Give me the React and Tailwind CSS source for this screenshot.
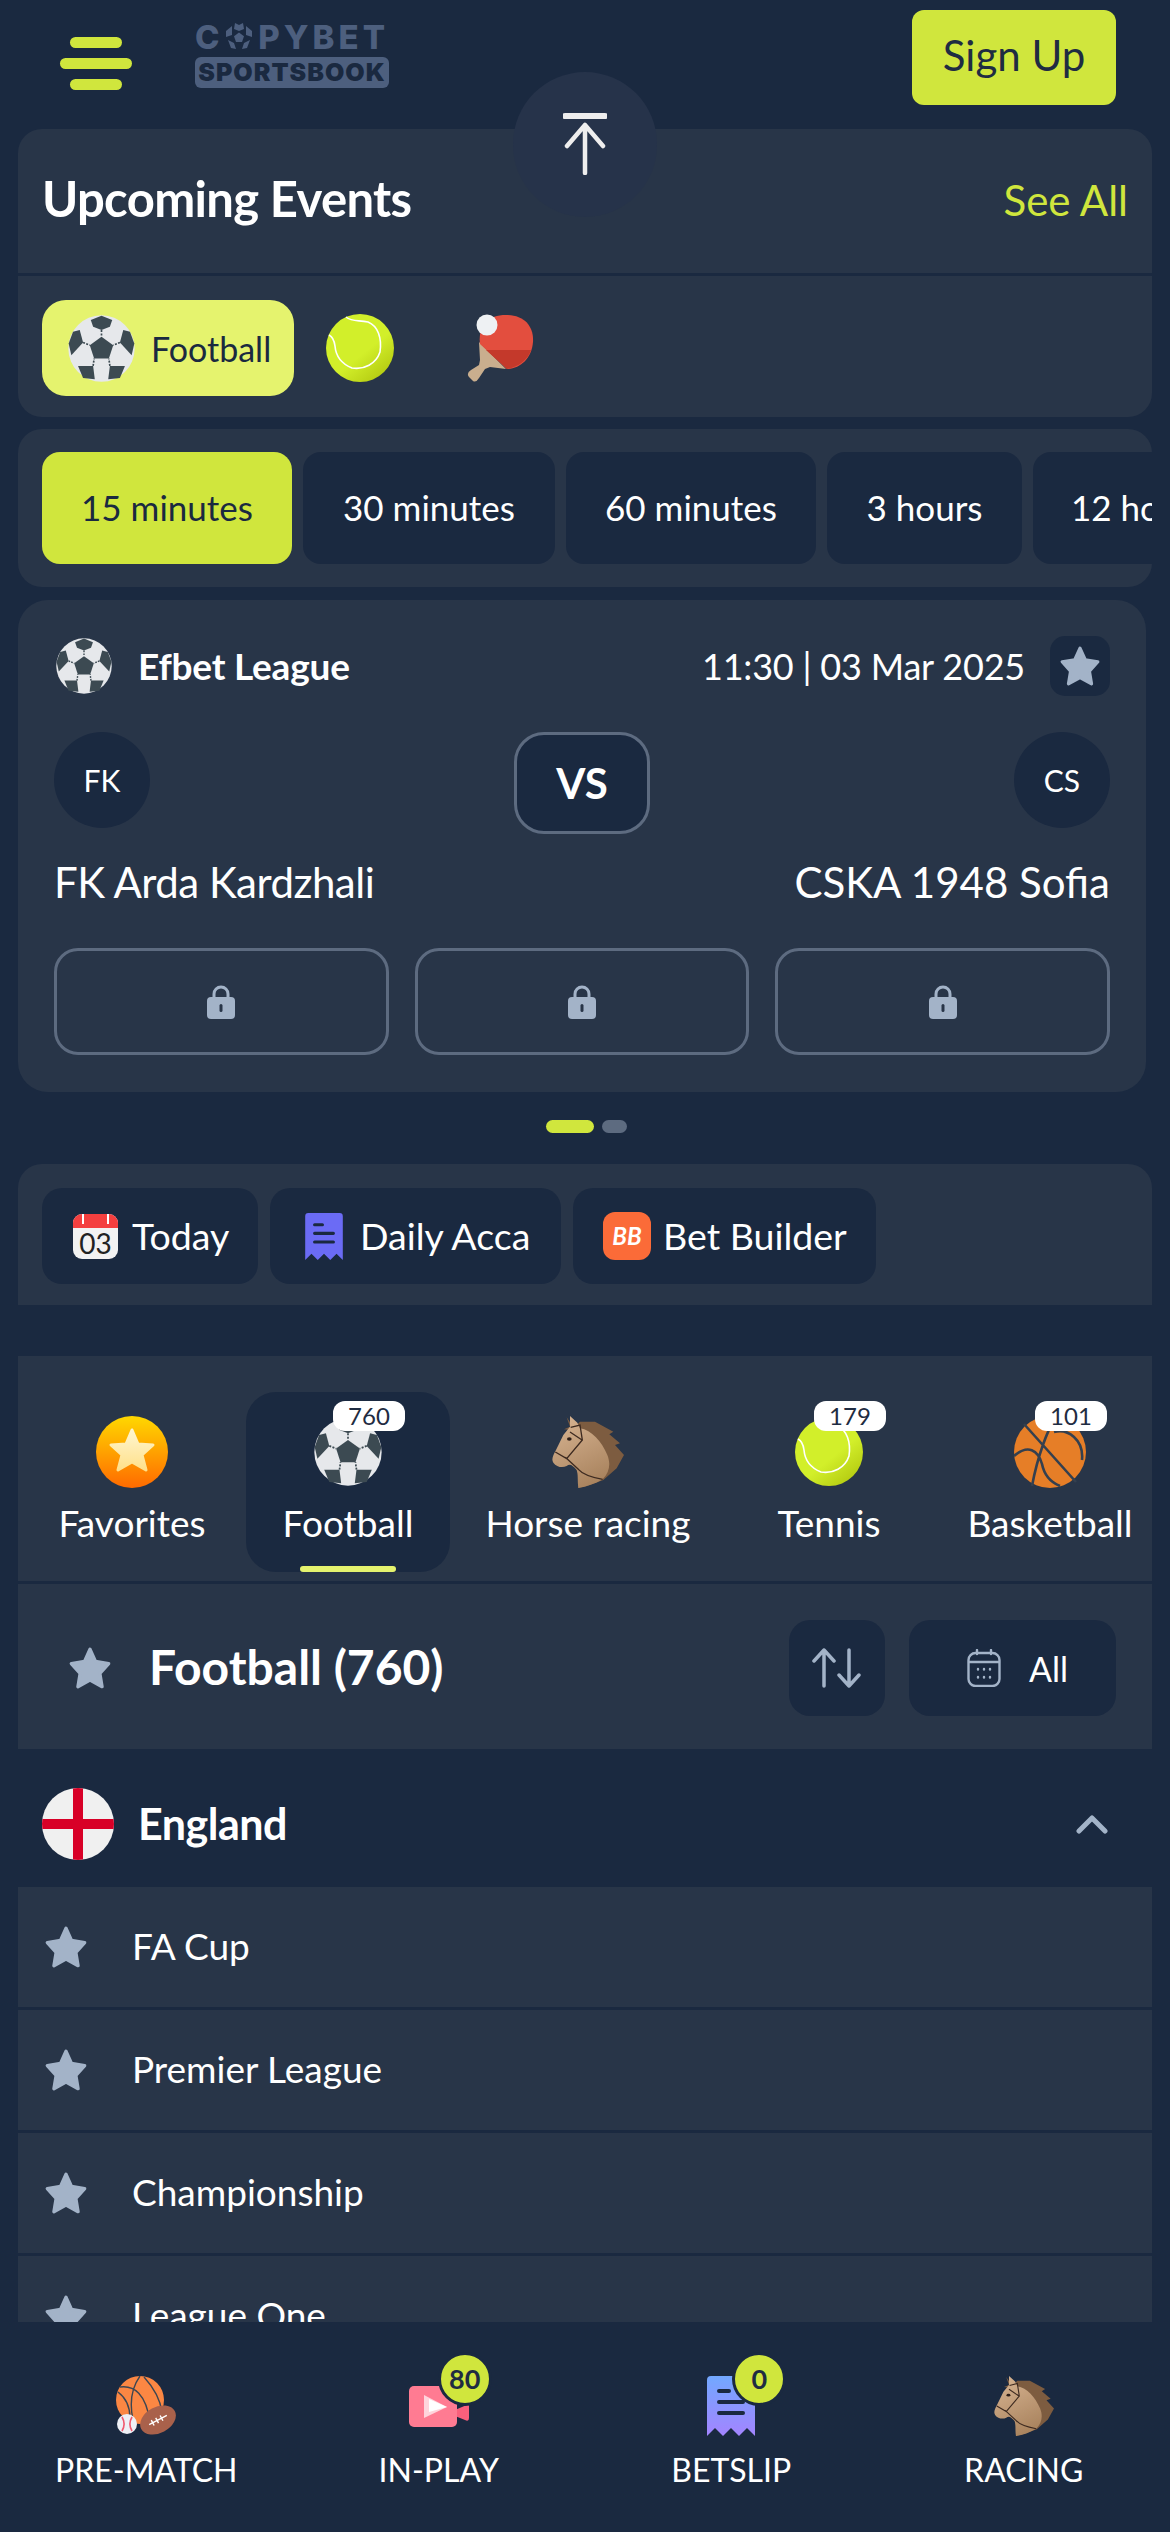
import React from "react";

const Soccer = ({ className }) => (
  <svg viewBox="-100 -100 200 200" className={className}>
    <circle r="99" fill="#e6e8eb" />
    <g fill="#3c4a52">
      <path d="M0 -35 35 -10 22 30 -22 30 -35 -10Z" />
      <path d="M-32 -85 0 -98 32 -85 25 -65 0 -55 -25 -65Z" />
      <path d="M-65 -55 -55 -18 -90 20 -98 -15 -85 -50Z" />
      <path d="M65 -55 55 -18 90 20 98 -15 85 -50Z" />
      <path d="M-70 52 -25 52 -20 92 -55 88Z" />
      <path d="M70 52 25 52 20 92 55 88Z" />
    </g>
    <g stroke="#3c4a52" strokeWidth="5" strokeDasharray="6 4" fill="none">
      <path d="M0 -55V-35M-55 -18-35 -10M55 -18 35 -10M-25 52-22 30M25 52 22 30" />
    </g>
  </svg>
);

const Tennis = ({ className }) => (
  <svg viewBox="0 0 68 68" className={className}>
    <defs>
      <linearGradient id="tb" x1="0.25" y1="0.2" x2="0.85" y2="0.95">
        <stop offset="0.5" stopColor="#d2ef2a" />
        <stop offset="1" stopColor="#b3c910" />
      </linearGradient>
    </defs>
    <circle cx="34" cy="34" r="34" fill="url(#tb)" />
    <path d="M20 3C26 8 32 6 42 8 52 12 56 24 54 38 50 50 38 56 26 54 16 50 10 44 9 32 8 24 5 22 3 21" fill="none" stroke="#fff" strokeWidth="1.6" />
  </svg>
);

const Paddle = ({ className }) => (
  <svg viewBox="0 0 68 68" className={className}>
    <path d="M13 51 5 56Q0 59 3 63L7 67Q10 69 13 64L19 55 24 53 40 55 13 28 14 46Z" fill="#c9ae8e" />
    <path d="M14 30C12 14 20 1 40 1 58 1 68 12 67 28 66 44 54 55 41 55Z" fill="#e34e3e" />
    <path d="M20 36 41 55C52 53 62 46 65 36Z" fill="#c4392b" />
    <circle cx="21" cy="11" r="10.5" fill="#eef1f3" />
  </svg>
);

const Horse = ({ className }) => (
  <svg viewBox="96 108 216 216" className={className}>
    <defs>
      <linearGradient id="hs" x1="0.2" y1="0" x2="0.6" y2="1">
        <stop offset="0" stopColor="#d6b391" />
        <stop offset="1" stopColor="#a9835e" />
      </linearGradient>
    </defs>
    <path d="M140 112 150 140 132 148 155 150 180 125 225 125 280 155 268 163 300 190 285 195 312 225 290 265 250 300 200 318 175 324 200 200Z" fill="#7d5c40" />
    <path d="M150 108 172 128 180 145C215 150 245 185 262 225 272 250 270 275 248 298 225 312 200 320 175 324 172 300 175 285 170 270 158 256 150 250 140 258 128 264 110 262 100 248 93 238 100 225 108 210L130 165 150 140Z" fill="url(#hs)" />
    <path d="M152 142 180 135 187 180 140 236 106 216M136 232 175 268C190 285 215 292 248 298M150 156 186 180" fill="none" stroke="#3d2a20" strokeWidth="4" />
    <ellipse cx="148" cy="177" rx="7" ry="5" fill="#2e1f18" />
  </svg>
);

const Basketball = ({ className }) => (
  <svg viewBox="0 0 72 72" className={className}>
    <circle cx="36" cy="36" r="36" fill="#e67e27" />
    <g fill="none" stroke="#34404f" strokeWidth="2.6">
      <path d="M10 8 62 66M40 4C34 14 24 38 18 70M0 40C14 28 24 34 28 48 30 58 36 66 46 70M40 16C54 12 70 24 68 44" />
    </g>
  </svg>
);

const FavStar = ({ className }) => (
  <svg viewBox="0 0 72 72" className={className}>
    <defs>
      <linearGradient id="fs" x1="0" y1="0" x2="0" y2="1">
        <stop offset="0" stopColor="#ffd800" />
        <stop offset="1" stopColor="#ff6a00" />
      </linearGradient>
      <linearGradient id="fs2" x1="0" y1="0" x2="0" y2="1">
        <stop offset="0" stopColor="#fff6d0" />
        <stop offset="1" stopColor="#ffe08a" />
      </linearGradient>
    </defs>
    <circle cx="36" cy="36" r="36" fill="url(#fs)" />
    <path d="M36 14 42 28 57 29 46 39 50 54 36 46 22 54 26 39 15 29 30 28Z" fill="url(#fs2)" stroke="url(#fs2)" strokeWidth="3" strokeLinejoin="round" />
  </svg>
);

const Star = ({ className }) => (
  <svg viewBox="0 0 40 40" className={className}>
    <path d="M20 3 25 14 37 16 29 25 31 37 20 31 9 37 11 25 3 16 15 14Z" fill="#a3b3c8" stroke="#a3b3c8" strokeWidth="3" strokeLinejoin="round" />
  </svg>
);

const Lock = () => (
  <svg viewBox="0 0 28 34" className="h-[34px] w-[28px]">
    <path d="M7 14V9a7 7 0 0 1 14 0v5" fill="none" stroke="#a3b3c8" strokeWidth="3" />
    <rect y="12" width="28" height="22" rx="4" fill="#a3b3c8" />
    <rect x="12.5" y="19" width="3" height="8" rx="1.5" fill="#283548" />
  </svg>
);

const CalendarToday = () => (
  <div className="relative h-[45px] w-[45px] overflow-hidden rounded-[9px] bg-[#f2f2f2]">
    <div className="h-[14px] bg-[#f43f3f]" />
    <div className="absolute left-[9px] top-0 h-[10px] w-[2px] bg-white" />
    <div className="absolute right-[9px] top-0 h-[10px] w-[2px] bg-white" />
    <div className="absolute inset-x-0 top-[14px] text-center text-[28px] leading-[31px] text-[#222]">03</div>
  </div>
);

const Receipt = ({ id, from, to, lines, className }) => (
  <svg viewBox="0 0 48 60" className={className}>
    <defs>
      <linearGradient id={id} x1="0" y1="0" x2="0" y2="1">
        <stop offset="0" stopColor={from} />
        <stop offset="1" stopColor={to} />
      </linearGradient>
    </defs>
    <path d="M0 4Q0 0 4 0H44Q48 0 48 4V60L40 52 32 60 24 52 16 60 8 52 0 60Z" fill={`url(#${id})`} />
    <path d="M12 15H22M12 26H36M12 37H36" stroke={lines} strokeWidth="4" strokeLinecap="round" />
  </svg>
);

const PreMatch = () => (
  <svg viewBox="0 0 60 60" className="h-[60px] w-[60px]">
    <circle cx="24" cy="24" r="24" fill="#fb8743" />
    <path d="M4 11C18 9 30 18 34 46M24 0C14 14 14 30 17 44M28 1C38 12 44 22 46 36M2 16C10 22 14 30 14 42" fill="none" stroke="#3c4652" strokeWidth="1.4" />
    <g transform="rotate(-28 42 44)">
      <ellipse cx="42" cy="44" rx="19" ry="13" fill="#a9614b" />
      <path d="M32 44H52M36 41V47M41 41V47M46 41V47" stroke="#fff" strokeWidth="1.4" />
    </g>
    <circle cx="11" cy="48" r="10" fill="#eef0f6" />
    <path d="M6 41C9 46 9 50 6 55M16 41C13 46 13 50 16 55" fill="none" stroke="#ef5a6f" strokeWidth="1.6" />
  </svg>
);

const Video = () => (
  <svg viewBox="0 0 60 42" className="h-[42px] w-[60px]">
    <path d="M46 24 60 18V32Q60 36 56 34L46 30Z" fill="#f9607c" />
    <rect width="48" height="41" rx="5" fill="#ff7b92" />
    <path d="M15 9 38 21 15 32Z" fill="#ffd4dc" />
    <path d="M20 13 38 21 20 26Z" fill="#fff" />
  </svg>
);

const sports = [
  { name: "Favorites", icon: <FavStar className="h-[72px] w-[72px]" />, cell: "w-[216px]" },
  { name: "Football", icon: <Soccer className="h-[68px] w-[68px]" />, cell: "w-[204px] bg-[#1a2940]", count: 760, active: true },
  { name: "Horse racing", icon: <Horse className="h-[72px] w-[72px]" />, cell: "w-[264px]" },
  { name: "Tennis", icon: <Tennis className="h-[68px] w-[68px]" />, cell: "w-[206px]", count: 179 },
  { name: "Basketball", icon: <Basketball className="h-[72px] w-[72px]" />, cell: "w-[224px]", count: 101 },
];

const tabs = [
  ["15 minutes", "w-[250px] bg-[#d0e63d] text-[#1a2940]"],
  ["30 minutes", "w-[252px] bg-[#1a2940] text-white"],
  ["60 minutes", "w-[250px] bg-[#1a2940] text-white"],
  ["3 hours", "w-[195px] bg-[#1a2940] text-white"],
  ["12 hours", "w-[190px] bg-[#1a2940] text-white"],
];

const leagues = ["FA Cup", "Premier League", "Championship", "League One"];

const navItems = [
  { label: "PRE-MATCH", icon: <PreMatch /> },
  { label: "IN-PLAY", icon: <Video />, count: 80, badge: "left-[29px] top-[-24px]", box: "pt-[10px]" },
  { label: "BETSLIP", icon: <Receipt id="bs" from="#72a8ff" to="#a384ff" lines="#1a2940" className="h-[60px] w-[48px]" />, count: 0, badge: "left-[25px] top-[-24px]" },
  { label: "RACING", icon: <Horse className="h-[60px] w-[60px]" /> },
];

export default function App() {
  return (
    <div className="relative flex h-[2532px] w-[1170px] flex-col overflow-hidden bg-[#1a2940] font-[Lato,sans-serif] text-white">
      <main className="min-h-0 flex-1 overflow-hidden">
        <header className="flex h-[129px] items-start pl-[60px] pr-[54px]">
          <div className="mt-[37px] flex w-[72px] flex-col items-center gap-[10px]">
            <div className="h-[11px] w-[52px] rounded-full bg-[#d0e63d]" />
            <div className="h-[11px] w-[72px] rounded-full bg-[#d0e63d]" />
            <div className="h-[11px] w-[52px] rounded-full bg-[#d0e63d]" />
          </div>
          <div className="ml-[63px] mt-[22px] w-[194px] font-[Inter,sans-serif]">
            <div className="flex h-[30px] items-center justify-between text-[33px] font-extrabold leading-none text-[#4d5f7e]">
              <span>C</span>
              <svg viewBox="0 0 30 30" className="h-[30px] w-[30px]">
                <g fill="#4d5f7e">
                  <path d="M15 10.5 20 14.2 18 20H12L10 14.2Z" />
                  <path d="M11 1 15 3 19 1 20 7 15 9 10 7Z" />
                  <path d="M22 4 28 9 28 15 22 13Z" />
                  <path d="M8 4 2 9 2 15 8 13Z" />
                  <path d="M4 18 10 21 12 27 7 26Z" />
                  <path d="M26 18 20 21 18 27 23 26Z" />
                </g>
              </svg>
              <span className="tracking-[4px]">PYBET</span>
            </div>
            <div className="mt-[5px] flex h-[31px] items-center justify-center rounded-[6px] bg-[#4d5f7e] text-[25px] font-black leading-none tracking-[1px] text-[#1a2940]">
              SPORTSBOOK
            </div>
          </div>
          <button className="ml-auto mt-[10px] h-[95px] w-[204px] rounded-[12px] bg-[#d0e63d] pb-[4px] text-[42px] text-[#1f2c42]">
            Sign Up
          </button>
        </header>

        <section className="mx-[18px] h-[288px] rounded-[24px] bg-[#283548]">
          <div className="flex h-[144px] items-start justify-between px-[24px] pt-[39px]">
            <h2 className="text-[49px] font-bold leading-[60px] tracking-[-0.65px]">Upcoming Events</h2>
            <span className="mt-[5px] text-[42px] leading-[54px] text-[#d0e63d]">See All</span>
          </div>
          <div className="h-[3px] bg-[#1a2940]" />
          <div className="flex items-center pl-[24px] pt-[24px]">
            <div className="flex h-[96px] w-[252px] items-center gap-[16px] rounded-[24px] bg-[#e5f36e] pl-[26px] text-[34px] text-[#1a2940]">
              <Soccer className="h-[67px] w-[67px]" />
              Football
            </div>
            <Tennis className="ml-[32px] h-[68px] w-[68px]" />
            <Paddle className="ml-[72px] h-[68px] w-[68px]" />
          </div>
        </section>

        <section className="mx-[18px] mt-[12px] flex h-[158px] gap-[11px] overflow-hidden rounded-[24px] bg-[#283548] pl-[24px] pt-[23px]">
          {tabs.map(([label, cls], i) => (
            <div key={label} className={`flex h-[112px] shrink-0 items-center rounded-[18px] pb-[2px] text-[35px] ${i === 4 ? "pl-[38px]" : "justify-center"} ${cls}`}>
              {label}
            </div>
          ))}
        </section>

        <section className="ml-[18px] mt-[13px] h-[492px] w-[1128px] rounded-[30px] bg-[#283548] px-[36px] pt-[36px]">
          <div className="flex h-[60px] items-center">
            <Soccer className="ml-[2px] h-[56px] w-[56px]" />
            <span className="ml-[26px] text-[37px] font-bold tracking-[-0.2px]">Efbet League</span>
            <span className="ml-auto text-[36px] tracking-[-0.2px]">11:30 | 03 Mar 2025</span>
            <div className="ml-[25px] flex h-[60px] w-[60px] items-center justify-center rounded-[15px] bg-[#1a2940]">
              <Star className="h-[42px] w-[42px]" />
            </div>
          </div>
          <div className="mt-[36px] flex items-start justify-between">
            <div className="flex h-[96px] w-[96px] items-center justify-center rounded-full bg-[#1a2940] text-[30px]">FK</div>
            <div className="flex h-[102px] w-[136px] items-center justify-center rounded-[30px] border-[3px] border-[#5d6b80] bg-[#1a2940] text-[42px] font-bold">VS</div>
            <div className="flex h-[96px] w-[96px] items-center justify-center rounded-full bg-[#1a2940] text-[30px]">CS</div>
          </div>
          <div className="mt-[22px] flex justify-between text-[42px] leading-[52px]">
            <span className="tracking-[-0.5px]">FK Arda Kardzhali</span>
            <span>CSKA 1948 Sofia</span>
          </div>
          <div className="mt-[40px] grid grid-cols-3 gap-[26px]">
            {[0, 1, 2].map((n) => (
              <div key={n} className="flex h-[107px] items-center justify-center rounded-[24px] border-[3px] border-[#5d6b80]">
                <Lock />
              </div>
            ))}
          </div>
        </section>

        <div className="mt-[28px] flex justify-center gap-[8px] pl-[2px]">
          <div className="h-[13px] w-[48px] rounded-full bg-[#d0e63d]" />
          <div className="h-[13px] w-[25px] rounded-full bg-[#5d6b80]" />
        </div>

        <section className="mx-[18px] mt-[31px] flex h-[141px] gap-[12px] rounded-t-[24px] bg-[#283548] pl-[24px] pt-[24px] text-[37.5px]">
          <div className="flex h-[96px] w-[216px] items-center gap-[14px] rounded-[20px] bg-[#1a2940] pl-[31px]">
            <CalendarToday />
            Today
          </div>
          <div className="flex h-[96px] w-[291px] items-center gap-[17px] rounded-[20px] bg-[#1a2940] pl-[35px]">
            <Receipt id="da" from="#6b6bf5" to="#6b6bf5" lines="#1a2940" className="h-[47px] w-[38px]" />
            Daily Acca
          </div>
          <div className="flex h-[96px] w-[303px] items-center gap-[12px] rounded-[20px] bg-[#1a2940] pl-[30px]">
            <div className="flex h-[48px] w-[48px] items-center justify-center rounded-[12px] bg-[#fb6b38] text-[24px] font-bold italic">BB</div>
            Bet Builder
          </div>
        </section>

        <section className="mx-[18px] mt-[51px] flex h-[225px] items-start gap-[6px] overflow-hidden bg-[#283548] pl-[6px] pt-[36px]">
          {sports.map((s) => (
            <div key={s.name} className={`relative flex h-[180px] shrink-0 flex-col items-center rounded-[30px] pt-[24px] ${s.cell}`}>
              <div className="flex h-[72px] items-center">{s.icon}</div>
              {s.count && (
                <div className="absolute left-1/2 top-[9px] flex h-[30px] w-[72px] translate-x-[-15px] items-center justify-center rounded-[12px] bg-white text-[24px] text-[#1f2c42]">
                  {s.count}
                </div>
              )}
              <span className="mt-[12px] whitespace-nowrap text-[37px] leading-[46px]">{s.name}</span>
              {s.active && <div className="absolute bottom-0 h-[6px] w-[96px] rounded-[3px] bg-[#e5f36e]" />}
            </div>
          ))}
        </section>

        <section className="mx-[18px] mt-[3px] flex h-[165px] items-start bg-[#283548] pl-[50px] pr-[36px] pt-[36px]">
          <div className="flex h-[96px] items-center">
            <Star className="h-[44px] w-[44px]" />
            <h3 className="ml-[37px] pb-[2px] text-[48px] font-bold">Football (760)</h3>
          </div>
          <div className="ml-auto flex h-[96px] w-[96px] items-center justify-center rounded-[21px] bg-[#1a2940]">
            <svg viewBox="0 0 50 40" className="h-[40px] w-[50px]" fill="none" stroke="#a3b3c8" strokeWidth="3.5" strokeLinecap="round" strokeLinejoin="round">
              <path d="M12 38V2M2 13 12 2 22 13M37 2V38M27 27 37 38 47 27" />
            </svg>
          </div>
          <div className="ml-[24px] flex h-[96px] w-[207px] items-center rounded-[21px] bg-[#1a2940] pl-[58px]">
            <svg viewBox="0 0 34 38" className="h-[38px] w-[34px]" fill="none" stroke="#a3b3c8" strokeWidth="2.4" strokeLinecap="round">
              <rect x="1.5" y="4" width="31" height="33" rx="7" />
              <path d="M2 13H32M10 1V5M24 1V5M11 20V20.5M17 20V20.5M23 20V20.5M11 28V28.5M17 28V28.5M23 28V28.5" />
            </svg>
            <span className="ml-[28px] text-[34px]">All</span>
          </div>
        </section>

        <div className="flex h-[138px] items-center pl-[42px] pr-[62px] pt-[12px]">
          <svg viewBox="0 0 72 72" className="h-[72px] w-[72px]">
            <clipPath id="fl"><circle cx="36" cy="36" r="36" /></clipPath>
            <g clipPath="url(#fl)">
              <rect width="72" height="72" fill="#f0f0f0" />
              <path d="M31 0H41V72H31ZM0 31H72V41H0Z" fill="#d80027" />
            </g>
          </svg>
          <span className="ml-[24px] text-[43px] font-bold tracking-[-0.5px]">England</span>
          <svg viewBox="0 0 32 20" className="ml-auto h-[20px] w-[32px]" fill="none" stroke="#a3b3c8" strokeWidth="5" strokeLinecap="round" strokeLinejoin="round">
            <path d="M3 17 16 4 29 17" />
          </svg>
        </div>

        <div className="mx-[18px]">
          {leagues.map((name) => (
            <div key={name} className="mb-[3px] flex h-[120px] items-center bg-[#283548] pl-[26px] text-[37px]">
              <Star className="h-[44px] w-[44px]" />
              <span className="ml-[44px] pb-[2px]">{name}</span>
            </div>
          ))}
        </div>
      </main>

      <nav className="grid h-[210px] shrink-0 grid-cols-4 bg-[#1a2940] pt-[54px]">
        {navItems.map((item) => (
          <div key={item.label} className="flex flex-col items-center">
            <div className={`relative flex h-[60px] items-start ${item.box || ""}`}>
              {item.icon}
              {item.count !== undefined && (
                <div className={`absolute box-content flex h-[48px] w-[48px] items-center justify-center rounded-full border-[3px] border-[#1a2940] bg-[#d0e63d] text-[27px] font-bold text-[#1f2c42] ${item.badge}`}>
                  {item.count}
                </div>
              )}
            </div>
            <span className="mt-[14px] text-[32px] leading-[40px]">{item.label}</span>
          </div>
        ))}
      </nav>

      <button className="absolute left-[513px] top-[72px] flex h-[145px] w-[144px] items-start justify-center rounded-full bg-[#26334a] pt-[41px]">
        <svg viewBox="0 0 44 62" className="h-[62px] w-[44px]" fill="none" stroke="#eeeeee" strokeLinecap="round" strokeLinejoin="round">
          <path d="M2 3H42" strokeWidth="6" />
          <path d="M22 60V12M4 33 22 12 40 33" strokeWidth="4.5" />
        </svg>
      </button>
    </div>
  );
}
